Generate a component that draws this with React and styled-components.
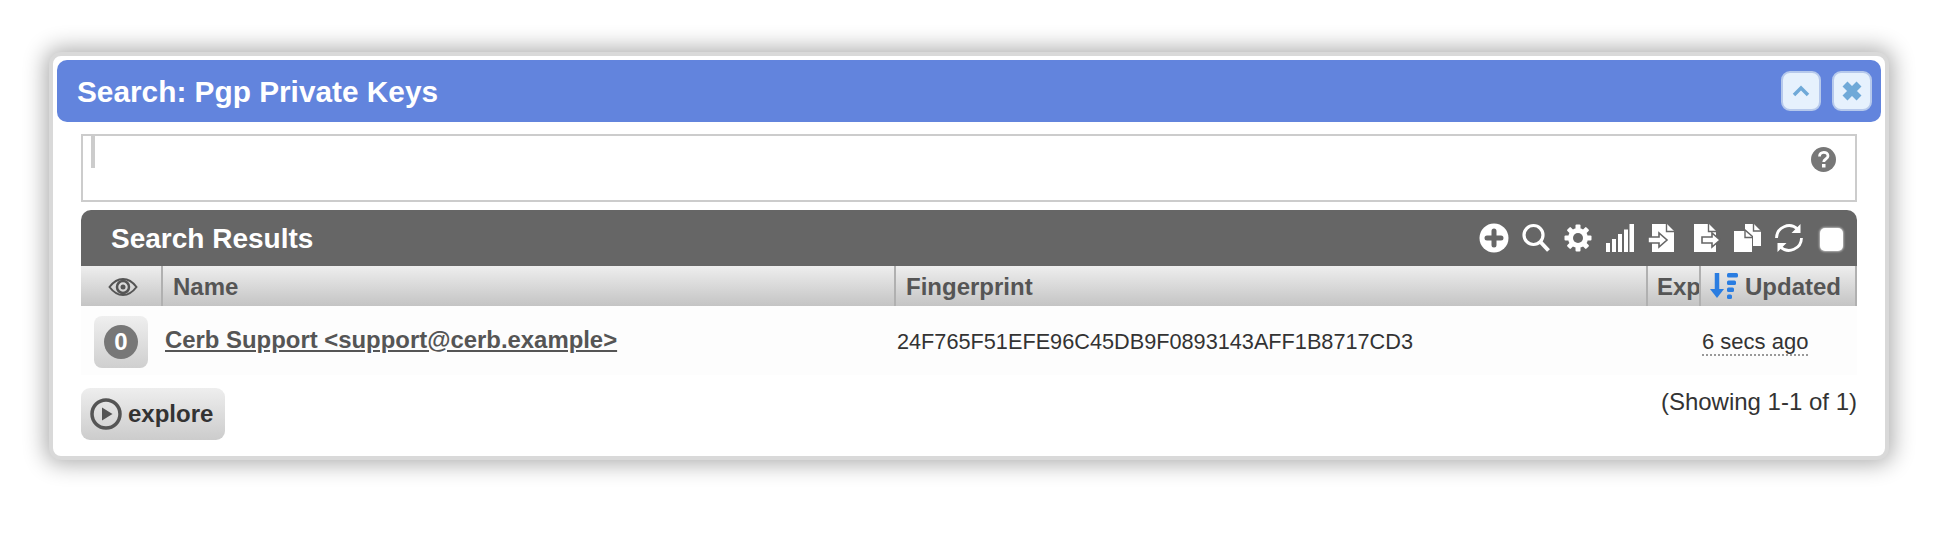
import React from 'react'
import styled, { createGlobalStyle } from 'styled-components'

const Global = createGlobalStyle`
  html, body { margin: 0; padding: 0; background: #fff; }
  body { font-family: "Liberation Sans", Arial, sans-serif; color: #333; }
`

const Page = styled.div`
  padding: 52px 49px 76px;
  width: 1938px;
  height: 536px;
  box-sizing: border-box;
  overflow: hidden;
`

const Panel = styled.div`
  box-sizing: border-box;
  width: 1840px;
  height: 408px;
  padding: 4px;
  background: #fff;
  border: 4px solid #d9d9d9;
  border-radius: 12px;
  box-shadow: 0 0 22px 4px rgba(0, 0, 0, 0.32);
`

const TitleBar = styled.div`
  display: flex;
  align-items: center;
  justify-content: space-between;
  height: 62px;
  padding: 0 9px 0 20px;
  background: #6284dd;
  border-radius: 10px;
`

const Title = styled.h1`
  margin: 2px 0 0;
  color: #fff;
  font-size: 29.8px;
  font-weight: 700;
`

const TitleButtons = styled.div`
  display: flex;
  gap: 11px;
`

const TitleButton = styled.div`
  box-sizing: border-box;
  display: flex;
  align-items: center;
  justify-content: center;
  width: 40px;
  height: 40px;
  background: #e6f1fd;
  border: 2px solid #b6c9ec;
  border-radius: 9px;
`

const Body = styled.div`
  padding: 12px 24px 0;
`

const Editor = styled.div`
  box-sizing: border-box;
  display: flex;
  justify-content: space-between;
  height: 68px;
  padding: 0 19px 0 8px;
  border: 2px solid #ccc;
`

const Caret = styled.div`
  width: 4px;
  height: 32px;
  background: #ccc;
`

const HelpIcon = styled.svg`
  margin-top: 11px;
`

const ResultsBar = styled.div`
  display: flex;
  align-items: center;
  justify-content: space-between;
  height: 56px;
  margin-top: 8px;
  padding: 0 13px 0 30px;
  background: #666;
  border-radius: 10px 10px 0 0;
`

const ResultsTitle = styled.h2`
  margin: 1px 0 0;
  color: #fff;
  font-size: 28px;
  font-weight: 700;
`

const Tools = styled.div`
  display: flex;
  align-items: center;
  gap: 13px;
  margin-right: 1px;
`

const Check = styled.div`
  width: 23px;
  height: 23px;
  margin-left: 3px;
  margin-top: 2px;
  background: #fff;
  border-radius: 5px;
  box-shadow: 0 0 2px 1px rgba(255, 255, 255, 0.5);
`

const Grid = styled.div`
  display: grid;
  grid-template-columns: 80px 733px 752px 53px 158px;
`

const HeadCell = styled.div`
  box-sizing: border-box;
  display: flex;
  align-items: center;
  gap: 7px;
  height: 40px;
  padding-top: 1px;
  padding-left: ${(p) => p.$pad ?? 10}px;
  overflow: hidden;
  white-space: nowrap;
  color: #555;
  font-size: 24px;
  font-weight: 700;
  background: linear-gradient(#eee, #c4c4c4);
  border-left: 2px solid ${(p) => (p.$first ? 'transparent' : '#b0b0b0')};
  ${(p) => p.$last && 'border-right: 2px solid #b0b0b0;'}
`

const RowCell = styled.div`
  display: flex;
  align-items: center;
  gap: 17px;
  box-sizing: border-box;
  height: 69px;
  padding-top: 2px;
  padding-left: ${(p) => p.$pad ?? 0}px;
  white-space: nowrap;
  font-size: 21.7px;
  background: #fdfdfd;
`

const NameCell = styled(RowCell)`
  grid-column: 1 / span 2;
`

const Badge = styled.div`
  display: flex;
  align-items: center;
  justify-content: center;
  width: 54px;
  height: 52px;
  background: linear-gradient(#efefef, #cfcfcf);
  border-radius: 8px;
`

const BadgeCount = styled.span`
  display: flex;
  align-items: center;
  justify-content: center;
  width: 34px;
  height: 34px;
  color: #fff;
  font-size: 24px;
  font-weight: 700;
  background: #777;
  border-radius: 50%;
`

const NameLink = styled.a`
  margin-bottom: 4px;
  color: #555;
  font-size: 23.9px;
  font-weight: 700;
  text-decoration: underline;
`

const Dotted = styled.span`
  margin-top: 2px;
  border-bottom: 2px dotted #999;
  font-size: 22px;
  line-height: 24px;
`

const Footer = styled.div`
  display: flex;
  align-items: flex-start;
  justify-content: space-between;
  margin-top: 13px;
`

const ExploreButton = styled.div`
  display: flex;
  align-items: center;
  gap: 6px;
  box-sizing: border-box;
  width: 144px;
  height: 52px;
  padding-left: 9px;
  color: #333;
  font-size: 24px;
  font-weight: 700;
  background: linear-gradient(#eee, #ccc);
  border-radius: 9px;
`

const Showing = styled.div`
  font-size: 24px;
  line-height: 28px;
`

const Icon = ({ w = 28, h = 28, vb = '0 0 28 28', children }) => (
  <svg width={w} height={h} viewBox={vb} fill="none">
    {children}
  </svg>
)

const PlusIcon = () => (
  <Icon w={30} h={30} vb="0 0 30 30">
    <circle cx="15" cy="15" r="14.5" fill="#fff" />
    <path d="M15 8v14M8 15h14" stroke="#666" strokeWidth="5" strokeLinecap="round" />
  </Icon>
)

const SearchIcon = () => (
  <Icon w={29} h={30} vb="0 0 29 30">
    <circle cx="11.5" cy="12" r="9.5" stroke="#fff" strokeWidth="3.2" />
    <path d="M18.5 19l8 8.5" stroke="#fff" strokeWidth="4" />
  </Icon>
)

const GearIcon = () => (
  <Icon>
    <g fill="#fff">
      {[0, 45, 90, 135].map((a) => (
        <rect key={a} x="11.500" y="0.500" width="5" height="27" rx="1" transform={`rotate(${a} 14 14)`} />
      ))}
      <circle cx="14" cy="14" r="10" />
    </g>
    <circle cx="14" cy="14" r="5" fill="#666" />
  </Icon>
)

const BarsIcon = () => (
  <Icon w={29} vb="0 0 29 28">
    <path d="M1 19h4v9H1zM7 15h4v13H7zM13 10h4v18h-4zM19 5.500h4V28h-4zM24.500 0H29v28h-4.500z" fill="#fff" />
  </Icon>
)

const ImportIcon = () => (
  <Icon w={30} vb="0 0 30 28">
    <path d="M5 0h15l7 7v21H5z" fill="#fff" />
    <path d="M19.500 0v7.500H27" stroke="#666" strokeWidth="1.400" />
    <path d="M1 13h11V9l8 7-8 7v-4H1z" fill="#fff" stroke="#666" strokeWidth="1.600" />
  </Icon>
)

const ExportIcon = () => (
  <Icon w={31} vb="0 0 31 28">
    <path d="M4 0h15l7 7v21H4z" fill="#fff" />
    <path d="M18.500 0v7.500H26" stroke="#666" strokeWidth="1.400" />
    <path d="M12 13h10V9l8 7-8 7v-4H12z" fill="#fff" stroke="#666" strokeWidth="1.600" />
  </Icon>
)

const CopyIcon = () => (
  <Icon w={27} vb="0 0 27 28">
    <path d="M11 0h9l7 7v15h-8V12l-8-7z" fill="#fff" />
    <path d="M0 7h11l7 6v15H0z" fill="#fff" />
    <path d="M11 7v6.500h7M19.500 0v7H27" stroke="#666" strokeWidth="1.400" />
  </Icon>
)

const RefreshIcon = () => (
  <Icon w={30} h={30} vb="0 0 30 30">
    <path d="M2.500 15a12.500 12.500 0 0 1 21-9M27.500 15a12.500 12.500 0 0 1-21 9" stroke="#fff" strokeWidth="2.800" />
    <path d="M26.500 1v9h-9zM3.500 29v-9h9z" fill="#fff" />
  </Icon>
)

const EyeIcon = () => (
  <Icon w={30} h={20} vb="0 0 30 20">
    <path d="M1.500 10C6 4 10 2 15 2s9 2 13.500 8C24 16 20 18 15 18S6 16 1.500 10z" stroke="#555" strokeWidth="2" />
    <circle cx="15" cy="10" r="6" stroke="#555" strokeWidth="2.500" />
    <circle cx="15" cy="10" r="2.500" fill="#555" />
  </Icon>
)

const SortIcon = () => (
  <Icon w={28} h={27} vb="0 0 28 27">
    <path d="M7 0v19" stroke="#2a7de1" strokeWidth="4.500" />
    <path d="M0 16h14l-7 9z" fill="#2a7de1" />
    <g fill="#2a7de1">
      <rect x="17" y="0" width="11" height="4.500" rx="1.500" />
      <rect x="17" y="7.500" width="9" height="4.500" rx="1.500" />
      <rect x="17" y="14.500" width="7" height="4.500" rx="1.500" />
      <rect x="17" y="21.500" width="5" height="4.500" rx="1.500" />
    </g>
  </Icon>
)

const PlayIcon = () => (
  <Icon w={32} h={32} vb="0 0 32 32">
    <circle cx="16" cy="16" r="14" stroke="#555" strokeWidth="3.500" />
    <path d="M12 9.500l10.500 6.500L12 22.500z" fill="#555" />
  </Icon>
)

export default function App() {
  return (
    <Page>
      <Global />
      <Panel>
        <TitleBar>
          <Title>Search: Pgp Private Keys</Title>
          <TitleButtons>
            <TitleButton>
              <Icon w={18} h={12} vb="0 0 18 12">
                <path d="M2 10l7-7 7 7" stroke="#6fa9d8" strokeWidth="3.500" />
              </Icon>
            </TitleButton>
            <TitleButton>
              <Icon w={22} h={22} vb="0 0 22 22">
                <path d="M4 4l14 14M18 4L4 18" stroke="#6fa9d8" strokeWidth="7" />
              </Icon>
            </TitleButton>
          </TitleButtons>
        </TitleBar>
        <Body>
          <Editor>
            <Caret />
            <HelpIcon width="25" height="25" viewBox="0 0 25 25">
              <circle cx="12.500" cy="12.500" r="12.500" fill="#777" />
              <path d="M8.500 9.500c0-5.500 8.500-5.500 8.500-.5 0 3-4.300 3-4.300 6" stroke="#fff" strokeWidth="2.800" fill="none" />
              <rect x="11" y="17" width="3.500" height="3.500" fill="#fff" />
            </HelpIcon>
          </Editor>
          <ResultsBar>
            <ResultsTitle>Search Results</ResultsTitle>
            <Tools>
              <PlusIcon />
              <SearchIcon />
              <GearIcon />
              <BarsIcon />
              <ImportIcon />
              <ExportIcon />
              <CopyIcon />
              <RefreshIcon />
              <Check />
            </Tools>
          </ResultsBar>
          <Grid>
            <HeadCell $first $pad={25}>
              <EyeIcon />
            </HeadCell>
            <HeadCell>Name</HeadCell>
            <HeadCell>Fingerprint</HeadCell>
            <HeadCell $pad={9}>Exp</HeadCell>
            <HeadCell $last $pad={9}>
              <SortIcon />
              Updated
            </HeadCell>
            <NameCell $pad={13}>
              <Badge>
                <BadgeCount>0</BadgeCount>
              </Badge>
              <NameLink>{'Cerb Support <support@cerb.example>'}</NameLink>
            </NameCell>
            <RowCell $pad={3}>
              24F765F51EFE96C45DB9F0893143AFF1B8717CD3
            </RowCell>
            <RowCell />
            <RowCell $pad={3}>
              <Dotted>6 secs ago</Dotted>
            </RowCell>
          </Grid>
          <Footer>
            <ExploreButton>
              <PlayIcon />
              explore
            </ExploreButton>
            <Showing>(Showing 1-1 of 1)</Showing>
          </Footer>
        </Body>
      </Panel>
    </Page>
  )
}
